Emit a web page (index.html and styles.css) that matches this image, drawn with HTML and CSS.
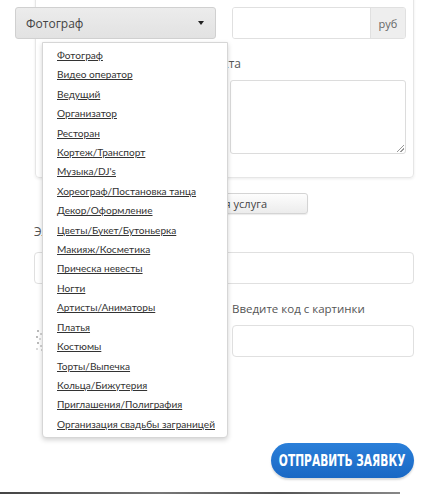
FILE: index.html
```html
<!DOCTYPE html>
<html lang="ru">
<head>
<meta charset="utf-8">
<title>Заявка</title>
<link rel="stylesheet" href="styles.css">
</head>
<body>
<div class="page">
  <div class="panel">
    <div class="row-top">
      <div class="select">
        <span class="select-value">Фотограф</span>
        <span class="caret"></span>
      </div>
      <div class="price">
        <div class="price-input"></div>
        <div class="price-addon">руб</div>
      </div>
    </div>
    <div class="label-desc">Описание проекта</div>
    <div class="textarea-row">
      <div class="textarea"><span class="grip"></span></div>
    </div>
  </div>

  <div class="add-row">
    <button class="add-btn">Дополнительная услуга</button>
  </div>

  <div class="field-label">Электронная почта</div>
  <div class="input-wide"></div>

  <div class="captcha-row">
    <div class="captcha-left">
      <svg class="captcha-img" width="12" height="30" viewBox="0 0 12 30">
        <g fill="#9a9a9a">
          <circle cx="4" cy="6" r="0.9"/><circle cx="7" cy="9" r="0.8"/><circle cx="3" cy="12" r="0.9"/>
          <circle cx="6" cy="14" r="0.7"/><circle cx="9" cy="16" r="0.8"/><circle cx="4" cy="18" r="0.9"/>
          <circle cx="7" cy="21" r="0.8"/><circle cx="3" cy="24" r="0.7"/><circle cx="8" cy="25" r="0.8"/>
        </g>
      </svg>
    </div>
    <div class="captcha-right">
      <div class="field-label-r">Введите код с картинки</div>
      <div class="input-captcha"></div>
    </div>
  </div>

  <div class="submit-row">
    <button class="submit"><span class="submit-text">ОТПРАВИТЬ ЗАЯВКУ</span></button>
  </div>

  <div class="photo-edge"></div>

  <ul class="dropdown">
    <li><a href="#">Фотограф</a></li>
    <li><a href="#">Видео оператор</a></li>
    <li><a href="#">Ведущий</a></li>
    <li><a href="#">Организатор</a></li>
    <li><a href="#">Ресторан</a></li>
    <li><a href="#">Кортеж/Транспорт</a></li>
    <li><a href="#">Музыка/DJ's</a></li>
    <li><a href="#">Хореограф/Постановка танца</a></li>
    <li><a href="#">Декор/Оформление</a></li>
    <li><a href="#">Цветы/Букет/Бутоньерка</a></li>
    <li><a href="#">Макияж/Косметика</a></li>
    <li><a href="#">Прическа невесты</a></li>
    <li><a href="#">Ногти</a></li>
    <li><a href="#">Артисты/Аниматоры</a></li>
    <li><a href="#">Платья</a></li>
    <li><a href="#">Костюмы</a></li>
    <li><a href="#">Торты/Выпечка</a></li>
    <li><a href="#">Кольца/Бижутерия</a></li>
    <li><a href="#">Приглашения/Полиграфия</a></li>
    <li><a href="#">Организация свадьбы заграницей</a></li>
  </ul>
</div>
</body>
</html>
```

FILE: styles.css
```css
* { box-sizing: border-box; }
html, body { margin: 0; padding: 0; background: #fff; }
body { font-family: "Open Sans", "DejaVu Sans", sans-serif; color: #555; }

.page {
  position: relative;
  width: 434px;
  height: 494px;
  overflow: hidden;
}

.panel {
  margin: -10px 0 0 35px;
  width: 379px;
  height: 188px;
  border: 1px solid #e6e6e6;
  border-radius: 4px;
  box-shadow: 0 1px 3px rgba(0,0,0,0.08);
  padding-top: 16px;
}

.row-top {
  display: flex;
  margin-left: -21px;
  gap: 16px;
  height: 32px;
}

.select {
  width: 201px;
  height: 32px;
  border: 1px solid #d0d0d0;
  border-radius: 3px;
  background: linear-gradient(#ececec, #e2e2e2);
  display: flex;
  align-items: center;
  justify-content: space-between;
  padding: 0 10px 0 10px;
  font-size: 12px;
  color: #444;
}
.caret {
  width: 0; height: 0;
  border-left: 3.5px solid transparent;
  border-right: 3.5px solid transparent;
  border-top: 4px solid #222;
  margin-right: 1px;
}

.price {
  width: 174px;
  height: 32px;
  display: flex;
  border: 1px solid #e0e0e0;
  border-radius: 3px;
  overflow: hidden;
}
.price-input { flex: 1; background: #fff; }
.price-addon {
  width: 35px;
  background: #eee;
  border-left: 1px solid #e0e0e0;
  display: flex;
  align-items: center;
  justify-content: center;
  font-size: 11px;
  color: #666;
}

.label-desc {
  margin-top: 17px;
  width: 205px;
  text-align: right;
  white-space: nowrap;
  font-size: 12px;
  line-height: 16px;
  color: #555;
}

.textarea-row {
  margin-top: 8px;
  padding-left: 194px;
}
.textarea {
  position: relative;
  width: 176px;
  height: 74px;
  border: 1px solid #dcdcdc;
  border-radius: 3px;
}
.grip {
  position: absolute;
  right: 1px; bottom: 1px;
  width: 7px; height: 7px;
  background: linear-gradient(135deg, transparent 45%, #999 45%, #999 55%, transparent 55%, transparent 70%, #999 70%, #999 80%, transparent 80%);
}

.add-row {
  margin-top: 15px;
  display: flex;
  width: 308px;
  justify-content: flex-end;
}
.add-btn {
  width: 206px;
  height: 21px;
  padding: 0 40px 0 0;
  text-align: right;
  border: 1px solid #d4d4d4;
  border-radius: 3px;
  background: linear-gradient(#fdfdfd, #ececec);
  box-shadow: 0 1px 1px rgba(0,0,0,0.08);
  font-family: "Open Sans", sans-serif;
  font-size: 11px;
  color: #444;
  white-space: nowrap;
}

.field-label {
  margin: 10px 0 0 34px;
  font-size: 12px;
  line-height: 16px;
  color: #555;
}
.input-wide {
  margin: 12px 0 0 34px;
  width: 380px;
  height: 32px;
  border: 1px solid #e0e0e0;
  border-radius: 4px;
}

.captcha-row {
  display: grid;
  grid-template-columns: 182px 182px;
  column-gap: 16px;
  margin: 17px 0 0 34px;
}
.captcha-left {
  display: flex;
  align-items: flex-end;
}
.captcha-img { display: block; margin-bottom: 2px; }
.field-label-r {
  font-size: 11.5px;
  line-height: 16px;
  color: #555;
  white-space: nowrap;
}
.input-captcha {
  margin-top: 8px;
  height: 32px;
  border: 1px solid #e0e0e0;
  border-radius: 4px;
}

.submit-row {
  margin-top: 86px;
  padding-left: 271px;
}
.submit {
  width: 143px;
  height: 35px;
  border: 0;
  border-radius: 18px;
  background: linear-gradient(#2a7fd9, #1a68c4);
  box-shadow: 0 2px 2px rgba(0,0,0,0.15);
  color: #fff;
  padding: 0;
  display: flex;
  align-items: center;
  justify-content: center;
}
.submit-text {
  display: inline-block;
  font-family: "DejaVu Sans Condensed", "DejaVu Sans", sans-serif;
  font-stretch: condensed;
  font-weight: bold;
  font-size: 15px;
  white-space: nowrap;
  transform: scaleX(0.79);
}

.photo-edge {
  position: absolute;
  left: 0; bottom: 0;
  width: 400px;
  height: 2px;
  background: linear-gradient(90deg, #444, #777 40%, #555 70%, #888);
}

.dropdown {
  position: absolute;
  left: 42px;
  top: 42px;
  width: 186px;
  height: 396px;
  margin: 0;
  padding: 3px 0 0 14px;
  list-style: none;
  background: #fff;
  border: 1px solid #d6d6d6;
  border-radius: 0 0 4px 4px;
  box-shadow: 0 2px 5px rgba(0,0,0,0.18);
}
.dropdown li {
  line-height: 19.42px;
  height: 19.42px;
  font-family: Lato, "Open Sans", sans-serif;
  font-size: 10.1px;
  white-space: nowrap;
}
.dropdown a {
  color: #333;
  text-decoration: underline;
}
```
